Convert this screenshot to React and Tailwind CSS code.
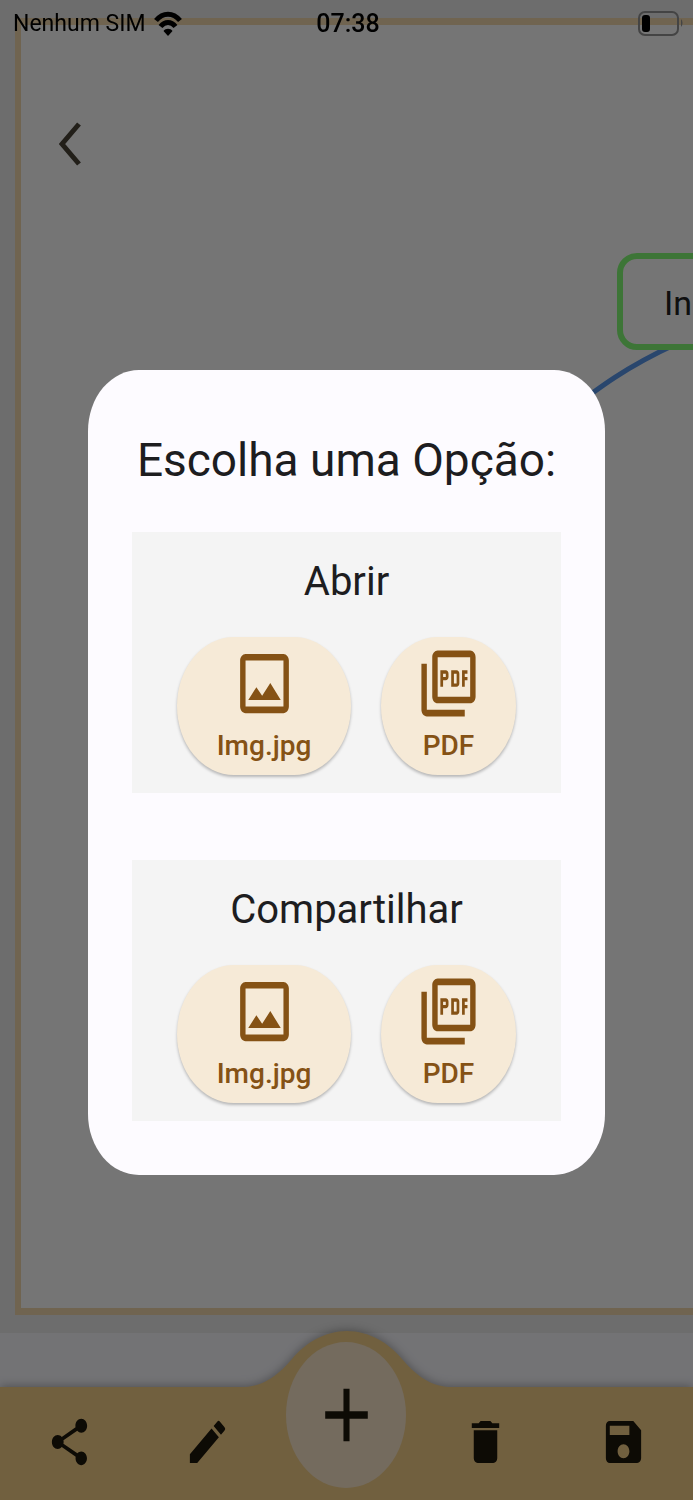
import { MdAdd, MdDelete, MdEdit, MdOutlineImage, MdOutlinePictureAsPdf, MdSave, MdShare } from 'react-icons/md'

function StatusBar() {
  return (
    <div className="absolute inset-x-0 top-0 z-20 grid h-12 grid-cols-3 items-center pl-[13px] pr-[10px] text-black">
      <div className="flex items-center gap-2">
        <span className="whitespace-nowrap text-[23px] leading-8">Nenhum SIM</span>
        <svg viewBox="0 0 28 26" className="h-[26px] w-7" fill="none" stroke="currentColor" strokeWidth="5">
          <path d="M2 9.5C9 1 19 1 26 9.5" />
          <path d="M6.5 15.5C11 10 17 10 21.5 15.5" />
          <path d="M14 25l-4.5-5c2-3 7-3 9 0z" fill="currentColor" stroke="none" />
        </svg>
      </div>
      <span className="text-center text-[25px] font-medium leading-8">07:38</span>
      <svg viewBox="0 0 45 26" className="h-[26px] w-[45px] justify-self-end">
        <rect x="1" y="1" width="39" height="23" rx="6" fill="none" stroke="#444" strokeWidth="2" />
        <rect x="4" y="4" width="8" height="17" rx="3" />
        <path d="M43 8c2 2 2 6 0 8z" fill="#444" />
      </svg>
    </div>
  )
}

function OptionButton({ icon: Icon, label, className }) {
  return (
    <button
      type="button"
      className={`flex h-[138px] flex-col items-center rounded-[57px/69px] bg-[#f6ead7] pt-[7px] text-[#855215] shadow-[0_2px_3px_rgba(0,0,0,0.25)] ${className}`}
    >
      <Icon className="h-[79px] w-[65px]" preserveAspectRatio="none" />
      <span className="mt-[5px] text-[28px] font-medium leading-9">{label}</span>
    </button>
  )
}

function OptionGroup({ title }) {
  return (
    <section className="bg-[#f4f4f4] pb-[18px] pt-[25px]">
      <h2 className="text-center text-[40px] leading-[50px]">{title}</h2>
      <div className="mt-[30px] flex justify-center gap-[30px]">
        <OptionButton icon={MdOutlineImage} label="Img.jpg" className="w-[174px]" />
        <OptionButton icon={MdOutlinePictureAsPdf} label="PDF" className="w-[135px]" />
      </div>
    </section>
  )
}

function ToolbarButton({ icon: Icon, label }) {
  return (
    <button type="button" aria-label={label} className="flex h-full items-center justify-center pb-[3px]">
      <Icon className="h-14 w-[47px]" preserveAspectRatio="none" />
    </button>
  )
}

function Toolbar() {
  return (
    <footer className="relative grid h-[113px] grid-cols-5 bg-[#f6d18a] text-[#1e180c] drop-shadow-[0_-1px_5px_rgba(0,0,0,0.3)]">
      <svg
        viewBox="0 0 204 57"
        className="absolute -top-14 left-1/2 h-[57px] w-[204px] -translate-x-1/2"
        fill="#f6d18a"
      >
        <path d="M0 56C20 55 35 42 47 28C60 12 80 0 102 0S144 12 157 28C169 42 184 55 204 56V57H0z" />
      </svg>
      <ToolbarButton icon={MdShare} label="Compartilhar" />
      <ToolbarButton icon={MdEdit} label="Editar" />
      <button
        type="button"
        aria-label="Adicionar"
        className="relative -mt-[45px] flex h-[146px] w-[120px] items-center justify-center justify-self-center rounded-[50%] bg-[#fce9cc]"
      >
        <MdAdd className="h-[90px] w-[73px]" preserveAspectRatio="none" />
      </button>
      <ToolbarButton icon={MdDelete} label="Excluir" />
      <ToolbarButton icon={MdSave} label="Salvar" />
    </footer>
  )
}

function MapCanvas() {
  return (
    <main className="flex flex-1 bg-[#ededed] pb-[18px] pl-[15px] pt-[18px]">
      <div className="relative flex-1 overflow-hidden border-y-[7px] border-l-[6px] border-[#f3d9ae] bg-white">
        <button type="button" aria-label="Voltar" className="ml-[38px] mt-[97px] block text-[#4a4438]">
          <svg viewBox="0 0 22 44" className="h-11 w-[22px]" fill="none" stroke="currentColor" strokeWidth="5">
            <path d="M20 2L3 22l17 20" />
          </svg>
        </button>
        <svg viewBox="0 0 130 90" className="absolute left-[530px] top-[305px] h-[90px] w-[130px]" fill="none">
          <path d="M5 90C50 56 75 37 125 14" stroke="#5998ed" strokeWidth="5" />
        </svg>
        <div className="absolute left-[596px] top-[228px] flex h-[97px] w-[200px] items-center rounded-[20px] border-[6px] border-[#86ff78] bg-white pl-[41px] pt-[3px] text-[34px] text-[#222]">
          In
        </div>
      </div>
    </main>
  )
}

export default function App() {
  return (
    <div className="relative flex min-h-screen flex-col overflow-hidden bg-[#fafaff] font-[Roboto,sans-serif]">
      <MapCanvas />
      <div className="h-[54px]" />
      <Toolbar />
      <StatusBar />
      <div className="absolute inset-0 z-10 flex items-center bg-black/54 px-[88px] pt-[45px]">
        <div
          role="dialog"
          aria-labelledby="dialog-title"
          className="w-full rounded-[51px/61px] bg-[#fdfbff] px-11 pb-[54px] pt-[60px] text-[#1d1d1f]"
        >
          <h1 id="dialog-title" className="whitespace-nowrap text-center text-[46px] leading-[60px]">
            Escolha uma Opção:
          </h1>
          <div className="mt-[42px] flex flex-col gap-[67px]">
            <OptionGroup title="Abrir" />
            <OptionGroup title="Compartilhar" />
          </div>
        </div>
      </div>
    </div>
  )
}
